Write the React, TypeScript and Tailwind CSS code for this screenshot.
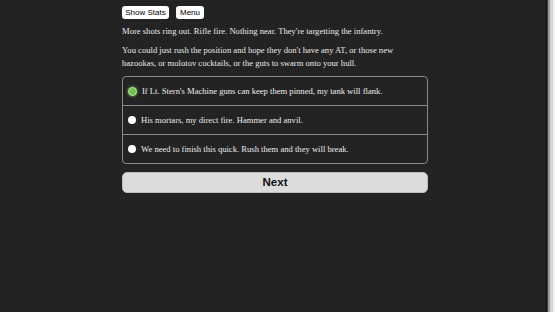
import React from "react";

const options = [
  "If Lt. Stern's Machine guns can keep them pinned, my tank will flank.",
  "His mortars, my direct fire. Hammer and anvil.",
  "We need to finish this quick. Rush them and they will break.",
];

export default function App() {
  return (
    <div className="flex h-[312px] w-[555px] overflow-hidden bg-[#232323]">
      <div className="flex flex-1 justify-center pl-[5px]">
        <div className="w-[306px] pt-[6px]">
          <div className="flex gap-[7px] font-['Liberation_Sans',sans-serif] text-[8px] text-black">
            <button className="h-[13px] w-[47px] rounded-[3px] bg-white leading-[13px]">
              Show Stats
            </button>
            <button className="h-[13px] w-[28px] rounded-[3px] bg-white leading-[13px]">
              Menu
            </button>
          </div>

          <div className="font-['Liberation_Serif',serif] text-[8.6px] leading-[13px] text-[#e8e8e8]">
            <p className="mt-[6px]">
              More shots ring out. Rifle fire. Nothing near. They're targetting the infantry.
            </p>
            <p className="mt-[6px] w-[290px]">
              You could just rush the position and hope they don't have any AT, or those new
              bazookas, or molotov cocktails, or the guts to swarm onto your hull.
            </p>
          </div>

          <div className="mt-[6px] rounded-[4px] border border-[#8a8a8a]">
            {options.map((text, i) => (
              <div
                key={i}
                className={
                  "flex items-center gap-[5px] pl-[5px] " +
                  (i > 0 ? "h-[29px] border-t border-[#8a8a8a]" : "h-[28px]")
                }
              >
                {i === 0 ? (
                  <span className="h-[9px] w-[9px] rounded-full border border-[#b8e3a4] bg-[#6fc24f] shadow-[0_0_3px_#7ed35a]" />
                ) : (
                  <span className="h-[8px] w-[8px] rounded-full bg-white" />
                )}
                <span className="font-['Liberation_Serif',serif] text-[8.6px] text-[#ececec]">
                  {text}
                </span>
              </div>
            ))}
          </div>

          <button className="mt-[8px] h-[21px] w-full rounded-[5px] border border-[#bdbdbd] bg-[#dcdcdc] font-['Liberation_Sans',sans-serif] text-[11.5px] font-bold text-[#111]">
            Next
          </button>
        </div>
      </div>
      <div className="flex h-full">
        <div className="w-[2px] bg-[#1a1a1a]" />
        <div className="w-[1px] bg-[#3a3a3a]" />
        <div className="w-[2px] bg-[#9a9a9a]" />
        <div className="w-[3px] bg-[#d6d6d6]" />
        <div className="w-[2px] bg-[#f2f2f2]" />
      </div>
    </div>
  );
}
